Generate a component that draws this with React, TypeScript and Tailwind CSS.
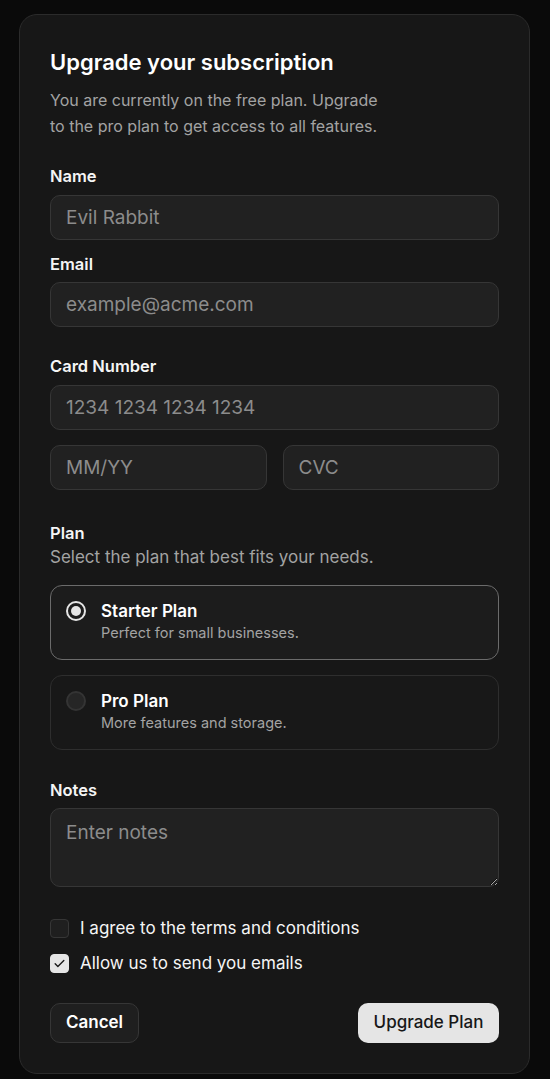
import { useState } from 'react'

const inputCls =
  'w-full h-[45px] rounded-[10px] border border-[#363636] bg-[#212121] px-[15px] text-[19px] text-white placeholder:text-[#8c8c8c] outline-none'

function Label({ children, className = '' }: { children: React.ReactNode; className?: string }) {
  return <p className={`text-[16.5px] leading-6 font-semibold text-[#f5f5f5] ${className}`}>{children}</p>
}

type Plan = { key: string; titulo: string; desc: string }
const planes: Plan[] = [
  { key: 'starter', titulo: 'Starter Plan', desc: 'Perfect for small businesses.' },
  { key: 'pro', titulo: 'Pro Plan', desc: 'More features and storage.' },
]

export default function App() {
  const [plan, setPlan] = useState('starter')
  const [terms, setTerms] = useState(false)
  const [emails, setEmails] = useState(true)

  return (
    <div className="min-h-[1079px] bg-[#0a0a0a] pt-[14px] pl-[19px] pr-[20px] pb-[6px]" style={{ fontFamily: 'Inter, "Noto Sans", sans-serif' }}>
      <div className="rounded-[18px] border border-[#2b2b2b] bg-[#171717] px-[30px] pt-[33px] pb-[30px]">
        <h1 className="text-[22px] leading-7 font-semibold text-white">Upgrade your subscription</h1>
        <p className="mt-[11px] text-[16px] leading-[26px] text-[#a3a3a3] w-[340px]">
          You are currently on the free plan. Upgrade to the pro plan to get access to all features.
        </p>

        <Label className="mt-[25px]">Name</Label>
        <input className={`${inputCls} mt-[7px]`} placeholder="Evil Rabbit" />

        <Label className="mt-[12px]">Email</Label>
        <input className={`${inputCls} mt-[6px]`} placeholder="example@acme.com" />

        <Label className="mt-[27px]">Card Number</Label>
        <input className={`${inputCls} mt-[7px]`} placeholder="1234 1234 1234 1234" />
        <div className="mt-[15px] grid grid-cols-2 gap-4">
          <input className={inputCls} placeholder="MM/YY" />
          <input className={inputCls} placeholder="CVC" />
        </div>

        <Label className="mt-[31px]">Plan</Label>
        <p className="text-[17px] leading-6 text-[#a3a3a3]">Select the plan that best fits your needs.</p>
        <div className="mt-[16px] space-y-[15px]">
          {planes.map(p => {
            const activo = p.key === plan
            return (
              <button
                key={p.key}
                onClick={() => setPlan(p.key)}
                className={`w-full text-left flex items-start gap-[15px] rounded-[12px] border px-[15px] pt-[14px] h-[75px] ${activo ? 'border-[#6b6b6b] bg-[#1c1c1c]' : 'border-[#2e2e2e] bg-[#181818]'}`}
              >
                <span
                  className={`mt-[1px] w-[20px] h-[20px] rounded-full shrink-0 flex items-center justify-center border-2 ${activo ? 'border-[#e5e5e5] bg-[#1c1c1c]' : 'border-[#343434] bg-[#262626]'}`}
                >
                  {activo && <span className="w-[10px] h-[10px] rounded-full bg-[#e5e5e5]" />}
                </span>
                <span className="flex flex-col">
                  <span className="text-[17px] leading-[22px] font-semibold text-white">{p.titulo}</span>
                  <span className="text-[14.5px] leading-[22px] text-[#a3a3a3]">{p.desc}</span>
                </span>
              </button>
            )
          })}
        </div>

        <Label className="mt-[28px]">Notes</Label>
        <textarea
          className="mt-[6px] block w-full h-[79px] rounded-[10px] border border-[#363636] bg-[#212121] px-[15px] py-[12px] text-[19px] leading-6 text-white placeholder:text-[#8c8c8c] outline-none"
          placeholder="Enter notes"
        />

        <div className="mt-[29px] space-y-[11px]">
          {[
            { txt: 'I agree to the terms and conditions', val: terms, set: setTerms },
            { txt: 'Allow us to send you emails', val: emails, set: setEmails },
          ].map(c => (
            <label key={c.txt} className="flex items-center gap-[11px] h-6 cursor-pointer">
              <span
                onClick={() => c.set(!c.val)}
                className={`w-[19px] h-[19px] rounded-[4px] shrink-0 flex items-center justify-center border ${c.val ? 'bg-[#e5e5e5] border-[#e5e5e5]' : 'bg-[#1f1f1f] border-[#363636]'}`}
              >
                {c.val && (
                  <svg width="13" height="13" viewBox="0 0 24 24" fill="none" stroke="#171717" strokeWidth="2.5" strokeLinecap="round" strokeLinejoin="round">
                    <path d="M4 12.5l5 5L20 6.5" />
                  </svg>
                )}
              </span>
              <span className="text-[17px] leading-6 text-[#f5f5f5]">{c.txt}</span>
            </label>
          ))}
        </div>

        <div className="mt-[28px] flex items-center justify-between">
          <button className="h-[40px] w-[89px] rounded-[10px] border border-[#363636] bg-[#1f1f1f] text-[17px] font-semibold text-white">Cancel</button>
          <button className="h-[40px] w-[141px] rounded-[10px] bg-[#e5e5e5] text-[17px] font-medium text-[#171717]">Upgrade Plan</button>
        </div>
      </div>
    </div>
  )
}
